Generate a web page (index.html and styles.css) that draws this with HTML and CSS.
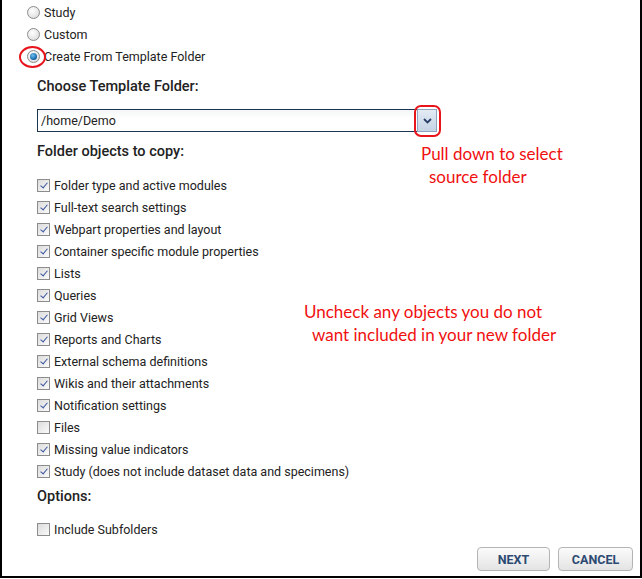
FILE: index.html
```html
<!DOCTYPE html>
<html lang="en">
<head>
    <meta charset="UTF-8">
    <title>Create From Template Folder</title>
    <link rel="stylesheet" href="styles.css">
</head>
<body>

<div class="frame">
    <div class="radio-group">
        <div class="radio-row"><span class="radio"></span>Study</div>
        <div class="radio-row"><span class="radio"></span>Custom</div>
        <div class="radio-row"><span class="radio checked"><span class="ring"></span></span>Create From Template Folder</div>
    </div>

    <div class="section">
        <h3>Choose Template Folder:</h3>
        <div class="combo">
            <div class="combo-input">/home/Demo</div>
            <div class="combo-btn">
                <svg width="9" height="6" viewBox="0 0 9 6"><path d="M1 1 L4.5 4.5 L8 1" fill="none" stroke="#2c3f6b" stroke-width="1.8"/></svg>
                <span class="ring-box"></span>
            </div>
        </div>

        <h3 class="objects-title">Folder objects to copy:</h3>
        <div class="checks">
            <div class="check-row"><span class="box on"></span>Folder type and active modules</div>
            <div class="check-row"><span class="box on"></span>Full-text search settings</div>
            <div class="check-row"><span class="box on"></span>Webpart properties and layout</div>
            <div class="check-row"><span class="box on"></span>Container specific module properties</div>
            <div class="check-row"><span class="box on"></span>Lists</div>
            <div class="check-row"><span class="box on"></span>Queries</div>
            <div class="check-row"><span class="box on"></span>Grid Views</div>
            <div class="check-row"><span class="box on"></span>Reports and Charts</div>
            <div class="check-row"><span class="box on"></span>External schema definitions</div>
            <div class="check-row"><span class="box on"></span>Wikis and their attachments</div>
            <div class="check-row"><span class="box on"></span>Notification settings</div>
            <div class="check-row"><span class="box"></span>Files</div>
            <div class="check-row"><span class="box on"></span>Missing value indicators</div>
            <div class="check-row"><span class="box on"></span>Study (does not include dataset data and specimens)</div>
        </div>

        <h3 class="options-title">Options:</h3>
        <div class="check-row"><span class="box"></span>Include Subfolders</div>
    </div>

    <div class="buttons">
        <button class="btn">NEXT</button>
        <button class="btn">CANCEL</button>
    </div>

    <!-- notes drawn over the form -->
    <div class="note note-pull">Pull down to select<br><span class="indent">source folder</span></div>
    <div class="note note-uncheck">Uncheck any objects you do not<br><span class="indent">want included in your new folder</span></div>
</div>

</body>
</html>
```

FILE: styles.css
```css
body {
    margin: 0;
    font-family: Roboto, "Liberation Sans", sans-serif;
    color: #222;
}

.frame {
    position: relative;
    width: 638px;
    height: 576px;
    border-left: 2px solid #000;
    border-right: 2px solid #000;
    border-bottom: 2px solid #000;
    background: #fff;
}

.radio-group {
    padding: 1px 0 0 25px;
}

.radio-row {
    display: flex;
    align-items: center;
    height: 22px;
    font-size: 12.5px;
}

.radio {
    position: relative;
    width: 11px;
    height: 11px;
    margin-right: 4px;
    border: 1px solid #8c8c8c;
    border-radius: 50%;
    background: radial-gradient(circle at 40% 35%, #fff 0%, #e6e6e6 60%, #cfcfcf 100%);
}

.radio.checked::after {
    content: "";
    position: absolute;
    left: 2px;
    top: 2px;
    width: 7px;
    height: 7px;
    border-radius: 50%;
    background: radial-gradient(circle at 40% 35%, #6fc0f0 0%, #1a6fb0 60%, #0b3d6e 100%);
}

/* Đường khoanh đỏ */
.ring {
    position: absolute;
    left: -9px;
    top: -5px;
    width: 23px;
    height: 18px;
    border: 2px solid #e8141c;
    border-radius: 50%;
}

.section {
    padding-left: 35px;
}

h3 {
    margin: 0;
    font-size: 14.5px;
    font-weight: 500;
    color: #222;
}

.section > h3:first-child {
    margin-top: 11px;
}

.combo {
    display: flex;
    width: 400px;
    height: 23px;
    margin-top: 14px;
}

.combo-input {
    flex: 1;
    border: 1px solid #1e3550;
    border-right: none;
    padding-left: 3px;
    font-size: 12.5px;
    line-height: 21px;
    background: linear-gradient(to bottom, #f4f6f7, #fff 40%);
}

.combo-btn {
    position: relative;
    width: 18px;
    border: 1px solid #8ea3bd;
    background: linear-gradient(to bottom, #e3ebf4, #c5d3e4);
    display: flex;
    align-items: center;
    justify-content: center;
}

.ring-box {
    position: absolute;
    left: -4px;
    top: -5px;
    width: 23px;
    height: 28px;
    border: 2px solid #e8141c;
    border-radius: 7px;
}

.objects-title {
    margin-top: 11px;
}

.checks {
    margin-top: 14px;
}

.check-row {
    display: flex;
    align-items: center;
    height: 22px;
    font-size: 12.5px;
}

.box {
    width: 11px;
    height: 11px;
    margin-right: 4px;
    border: 1px solid #8c8c8c;
    background: linear-gradient(135deg, #dcdcdc, #fafafa);
    display: flex;
    align-items: center;
    justify-content: center;
}

.box.on::before {
    content: "";
    width: 3px;
    height: 6px;
    margin-top: -2px;
    border-right: 1.5px solid #3a55a0;
    border-bottom: 1.5px solid #3a55a0;
    transform: rotate(40deg);
}

.options-title {
    margin-top: 6px;
    margin-bottom: 13px;
}

.buttons {
    position: absolute;
    right: 7px;
    bottom: 5px;
    display: flex;
    gap: 8px;
}

.btn {
    height: 24px;
    padding: 0;
    border: 1px solid #b4b4b4;
    border-radius: 4px;
    background: linear-gradient(to bottom, #fbfbfb, #e4e4e4);
    font-family: Roboto, "Liberation Sans", sans-serif;
    font-size: 12.5px;
    font-weight: bold;
    color: #2d4a72;
}

.btn:first-child {
    width: 73px;
}

.btn:last-child {
    width: 75px;
}

/* Chú thích màu đỏ */
.note {
    position: absolute;
    font-family: Lato, "Liberation Sans", sans-serif;
    font-size: 17px;
    line-height: 23px;
    color: #f01010;
}

.note .indent {
    padding-left: 8px;
}

.note-pull {
    left: 419px;
    top: 142px;
}

.note-uncheck {
    left: 302px;
    top: 300px;
}
```
